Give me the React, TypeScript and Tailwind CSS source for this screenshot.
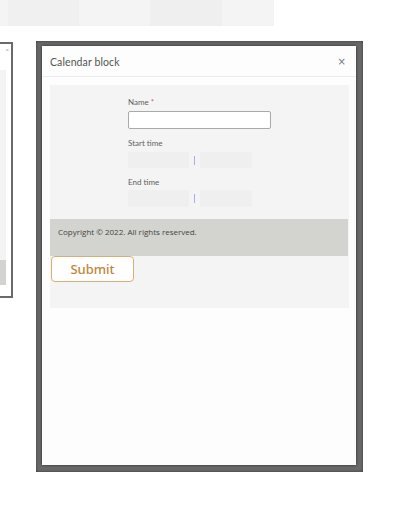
import React from "react";

export default function App() {
  return (
    <div className="w-[400px] h-[513px] bg-white overflow-hidden relative" style={{ fontFamily: "Lato, 'Open Sans', sans-serif" }}>
      {/* top bar */}
      <div className="flex h-[26px]">
        <div className="w-[8px] bg-[#f4f4f4]" />
        <div className="w-[71px] bg-[#f0f0f0]" />
        <div className="w-[71px] bg-[#f4f4f4]" />
        <div className="w-[72px] bg-[#efefef]" />
        <div className="w-[52px] bg-[#f4f4f4]" />
      </div>

      <div className="flex items-start mt-[15px]">
        {/* left panel (partially visible) */}
        <div className="w-[13px] h-[256px] mt-[1px] border-y-2 border-r-2 border-[#6a6a6a] bg-white flex flex-col">
          <div className="h-[12px] flex items-center justify-end pr-[2px] text-[6px] leading-none text-[#999]">×</div>
          <div className="mt-[14px] w-[6px] h-[190px] bg-[#f4f4f4]" />
          <div className="w-[6px] h-[25px] bg-[#d3d3cf]" />
        </div>

        {/* modal */}
        <div className="ml-[23px] w-[327px] h-[431px] bg-[#6a6a6a] pt-[5px] pl-[6px] pr-[7px] pb-[7px] shadow-[inset_0_0_3px_rgba(0,0,0,0.5)]">
          <div className="h-full bg-[#fdfdfd] flex flex-col shadow-[0_0_3px_rgba(0,0,0,0.6)]">
            <div className="h-[31px] pt-[2px] flex items-center justify-between pl-[8px] pr-[10px] border-b border-[#ececec]">
              <span className="text-[10.5px] leading-[12px] text-[#4f564f] tracking-[0.1px]">Calendar block</span>
              <span className="text-[10px] leading-none text-[#777]" style={{ fontFamily: "'DejaVu Sans', sans-serif" }}>×</span>
            </div>

            <div className="mt-[8px] ml-[8px] mr-[7px] h-[223px] bg-[#f4f4f4] flex flex-col">
              <div className="pl-[78px] pt-[12px] flex flex-col h-[134px]">
                <div className="text-[8px] leading-[10px] text-[#606060]">
                  Name <span className="text-[#e05a4a]">*</span>
                </div>
                <div className="mt-[4px] w-[143px] h-[18px] bg-white border border-[#a9a9a9] rounded-[2px]" />

                <div className="mt-[9px] text-[8px] leading-[10px] text-[#606060]">Start time</div>
                <div className="mt-[4px] flex items-center h-[16px]">
                  <div className="w-[61px] h-[16px] bg-[#efefef] rounded-[2px]" />
                  <div className="ml-[5px] w-px h-[9px] bg-[#9db3e6]" />
                  <div className="ml-[5px] w-[52px] h-[16px] bg-[#efefef] rounded-[2px]" />
                </div>

                <div className="mt-[9px] text-[8px] leading-[10px] text-[#606060]">End time</div>
                <div className="mt-[3px] flex items-center h-[17px]">
                  <div className="w-[61px] h-[17px] bg-[#efefef] rounded-[2px]" />
                  <div className="ml-[5px] w-px h-[9px] bg-[#9db3e6]" />
                  <div className="ml-[5px] w-[52px] h-[17px] bg-[#efefef] rounded-[2px]" />
                </div>
              </div>

              <div
                className="h-[37px] bg-[#d3d3cf] pl-[8px] pt-[8px] mr-px text-[8px] leading-[10px] text-[#444]"
                style={{ fontFamily: "'Open Sans', sans-serif" }}
              >
                Copyright © 2022. All rights reserved.
              </div>

              <div className="pl-[1px]">
                <button
                  className="w-[83px] h-[26px] border border-[#dcae72] rounded-[4px] bg-white text-[13px] leading-none font-medium text-[#c4843a] flex items-center justify-center"
                  style={{ fontFamily: "'Noto Sans', 'Open Sans', sans-serif" }}
                >
                  Submit
                </button>
              </div>
            </div>
          </div>
        </div>
      </div>
    </div>
  );
}
